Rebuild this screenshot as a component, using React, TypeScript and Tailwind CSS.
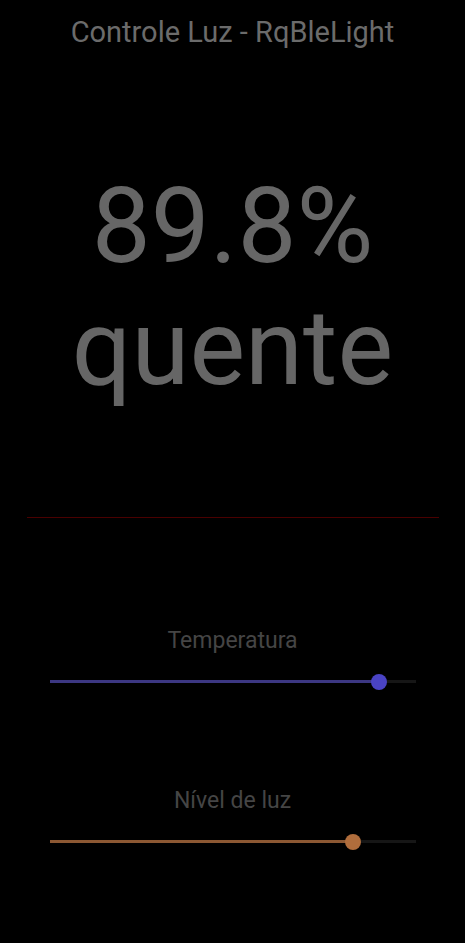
import React from "react";

type SliderProps = {
  label: string;
  value: number; // thumb center, px from track start
  activeColor: string;
  thumbColor: string;
};

const font = { fontFamily: "Roboto, 'Noto Sans', sans-serif" };

function Slider({ label, value, activeColor, thumbColor }: SliderProps) {
  return (
    <div className="flex flex-col items-center">
      <span className="text-[23px] leading-[26px] text-[#454545]">{label}</span>
      <div className="relative mt-[20px] h-4 w-[366px]">
        <div className="absolute left-0 right-0 top-[6px] h-[3px] bg-[#161616]" />
        <div
          className={`absolute left-0 top-[6px] h-[3px] ${activeColor}`}
          style={{ width: value }}
        />
        <div
          className={`absolute top-0 h-4 w-4 -translate-x-1/2 rounded-full ${thumbColor}`}
          style={{ left: value }}
        />
      </div>
    </div>
  );
}

export default function App() {
  return (
    <div className="flex min-h-[943px] w-full flex-col items-center bg-black" style={font}>
      <h1 className="mt-[14px] text-[29px] leading-[36px] text-[#6b6b6b]">
        Controle Luz - RqBleLight
      </h1>

      <div className="mt-[116px] flex flex-col items-center text-[105px] leading-[122px] text-[#666666]">
        <span>89.8%</span>
        <span>quente</span>
      </div>

      <div className="mt-[107px] h-px w-[412px] bg-[#4a0000]" />

      <div className="mt-[110px]">
        <Slider
          label="Temperatura"
          value={329}
          activeColor="bg-[#3c3782]"
          thumbColor="bg-[#4a43c4]"
        />
      </div>

      <div className="mt-[98px]">
        <Slider
          label="Nível de luz"
          value={303}
          activeColor="bg-[#8c5833]"
          thumbColor="bg-[#b06d3c]"
        />
      </div>
    </div>
  );
}
